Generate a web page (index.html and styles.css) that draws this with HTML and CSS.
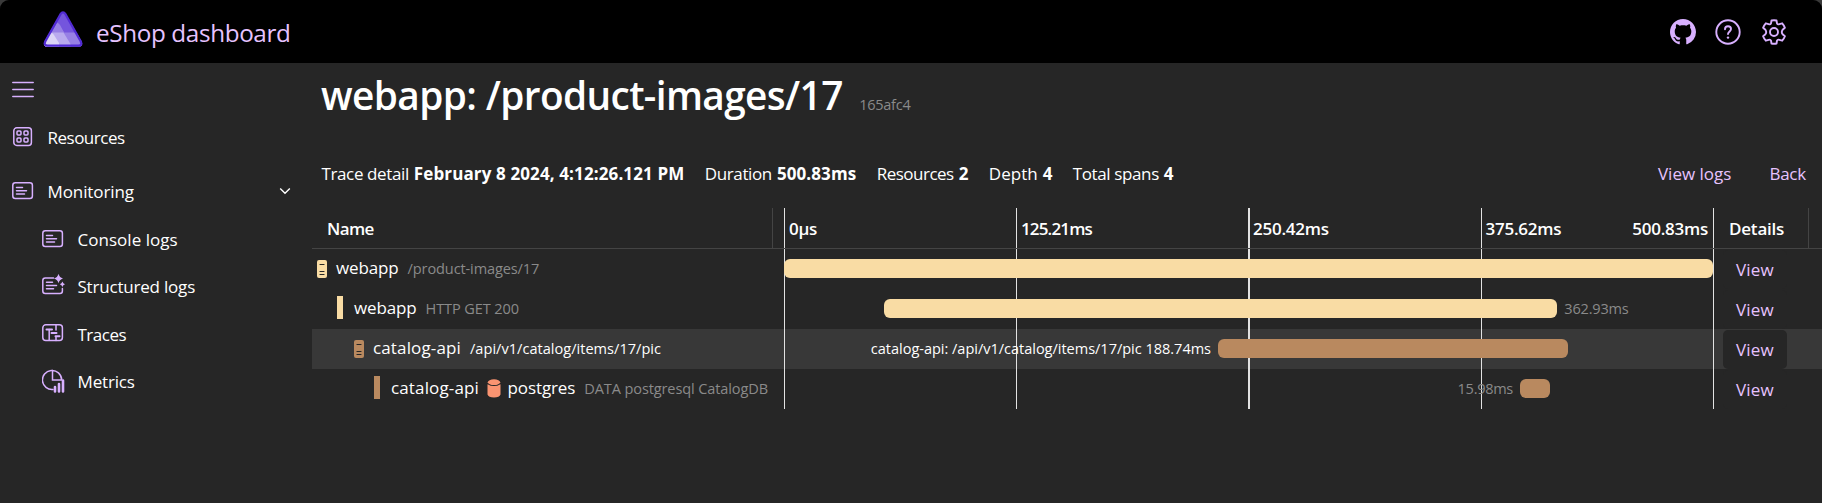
FILE: index.html
```
<!DOCTYPE html>
<html lang="en">
<head>
<meta charset="utf-8">
<title>eShop dashboard</title>
<link rel="stylesheet" href="styles.css">
</head>
<body>
<div class="app">
  <header class="topbar">
    <svg class="logo" width="42" height="38" viewBox="0 0 42 38">
      <defs><clipPath id="tri"><path d="M18 3.4Q21 -1.6 24 3.4L39.6 30.6Q41.6 35.6 36.6 35.6H5.4Q.4 35.6 2.4 30.6Z"/></clipPath></defs>
      <g clip-path="url(#tri)">
        <path fill="#7455dd" d="M0 0h42v38H0z"/>
        <path fill="#9780e5" d="M9 21.5 15.5 11.500 22 21.500H42V38H0z"/>
        <path fill="#9780e5" d="M11 21.500 14 13.500Q16 11 18 14L22 21.500z"/>
        <path fill="#b9aaee" d="M7 21.500H21.500L28.500 33V38H0z"/>
        <path fill="#dcd5f6" d="M0 38 7 24Q9.500 20 12 24L17 32V38z"/>
      </g>
      <path fill="none" stroke="#512bd4" stroke-width="2.300" stroke-linejoin="round" d="M18.500 3.200Q21 -.4 23.500 3.200L38.800 30.500Q40.500 34.600 36.500 34.600H5.500Q1.500 34.600 3.200 30.500Z"/>
    </svg>
    <span class="brand">eShop dashboard</span>
    <div class="top-actions">
      <svg width="26" height="26" viewBox="0 0 16 16" fill="#d8b0ff"><path d="M8 0C3.580 0 0 3.580 0 8c0 3.540 2.290 6.530 5.470 7.590.4.070.55-.17.55-.38 0-.19-.01-.82-.01-1.490-2.010.37-2.530-.49-2.690-.94-.09-.23-.48-.94-.82-1.130-.28-.15-.68-.52-.01-.53.63-.01 1.080.58 1.230.82.72 1.210 1.870.87 2.330.66.070-.52.28-.87.51-1.070-1.780-.2-3.640-.89-3.640-3.950 0-.87.31-1.590.82-2.150-.08-.2-.36-1.020.08-2.120 0 0 .67-.21 2.200.82.64-.18 1.320-.27 2-.27s1.360.09 2 .27c1.530-1.040 2.200-.82 2.200-.82.44 1.100.16 1.920.08 2.120.51.56.82 1.270.82 2.150 0 3.070-1.870 3.750-3.650 3.950.29.25.54.73.54 1.480 0 1.070-.01 1.930-.01 2.200 0 .21.15.46.55.38A8.010 8.010 0 0 0 16 8c0-4.420-3.580-8-8-8z"/></svg>
      <svg width="26" height="26" viewBox="0 0 26 26" fill="none" stroke="#d8b0ff" stroke-width="1.900"><circle cx="13" cy="13" r="11.700"/><path stroke-linecap="round" d="M10 10.300C10 8.400 11.300 7.300 13 7.300S16 8.400 16 10.100C16 12.300 13 12.600 13 15.100"/><circle cx="13" cy="18.600" r="1.200" fill="#d8b0ff" stroke="none"/></svg>
      <svg width="26" height="26" viewBox="0 0 26 26" fill="none" stroke="#d8b0ff" stroke-width="1.900" stroke-linejoin="round"><path d="M10.500 1.500Q13 .9 15.500 1.500L16 4.400Q16.600 5.800 18.400 5.200L21.200 4.300Q23 6.200 23.900 8.700L21.600 10.700Q20 13 21.600 15.300L23.900 17.300Q23 19.800 21.200 21.700L18.400 20.800Q16.600 20.200 16 21.600L15.500 24.500Q13 25.100 10.500 24.500L10 21.600Q9.400 20.200 7.600 20.800L4.800 21.700Q3 19.800 2.100 17.300L4.400 15.300Q6 13 4.400 10.700L2.100 8.700Q3 6.200 4.800 4.300L7.600 5.200Q9.400 5.800 10 4.400Z"/><circle cx="13" cy="13" r="4"/></svg>
    </div>
  </header>
  <div class="body">
    <nav class="sidebar">
      <div class="nav-item menu"><svg class="ico" width="22" height="22" viewBox="0 0 22 22"><path d="M.8 4.500h20.400M.8 11.500h20.400M.8 18.500h20.400"/></svg></div>
      <div class="nav-item resources">
        <svg class="ico" width="22" height="22" viewBox="0 0 22 22"><rect x="1.800" y="1.800" width="17.600" height="17.600" rx="3"/><rect x="5" y="5" width="4" height="4" rx="1"/><rect x="12" y="5" width="4" height="4" rx="1"/><rect x="5" y="12" width="4" height="4" rx="1"/><rect x="12" y="12" width="4" height="4" rx="1"/></svg>
        <span class="t-res">Resources</span>
      </div>
      <div class="nav-item monitoring">
        <svg class="ico" width="22" height="22" viewBox="0 0 22 22"><rect x=".8" y="2.800" width="19.600" height="15.600" rx="2.500"/><path d="M4.500 7.500h6M4.500 10.700h10M4.500 13.900h8"/></svg>
        <span class="t-mon">Monitoring</span>
        <svg class="chevron" width="12" height="8" viewBox="0 0 12 8"><path d="M1.200 1.400 6 6.200l4.800-4.800"/></svg>
      </div>
      <div class="nav-item sub console">
        <svg class="ico" width="22" height="22" viewBox="0 0 22 22"><rect x=".8" y="2.800" width="19.600" height="15.600" rx="2.500"/><path d="M4.500 7.500h6M4.500 10.700h10M4.500 13.900h8"/></svg>
        <span class="t-console">Console logs</span>
      </div>
      <div class="nav-item sub structured">
        <svg class="ico" width="24" height="24" viewBox="0 0 24 24"><path d="M11.500 4H3.300Q.8 4 .8 6.500V17Q.8 19.500 3.300 19.500H18Q20.400 19.500 20.400 17V14.500M4.500 8.200h6M4.500 11.500h10M4.500 14.700h7"/><path class="fill" d="M16.500 -.2Q17.400 3.500 21 4.500 17.400 5.500 16.500 9.200 15.600 5.500 12 4.500 15.600 3.500 16.500 -.2ZM20.400 7.500Q21 9.700 23 10.300 21 10.900 20.400 13 19.800 10.900 17.800 10.300 19.800 9.700 20.400 7.500Z"/></svg>
        <span class="t-struct">Structured logs</span>
      </div>
      <div class="nav-item sub traces">
        <svg class="ico" width="22" height="22" viewBox="0 0 22 22"><rect x=".8" y="1.800" width="19.600" height="15.600" rx="3"/><path d="M7.200 6.500V17M14 2v5M14 14v3.500"/><path class="thick" d="M4.500 6.400h5.500M9.500 10h5M13.500 13.300h4"/></svg>
        <span class="t-traces">Traces</span>
      </div>
      <div class="nav-item sub metrics">
        <svg class="ico" width="24" height="24" viewBox="0 0 24 24"><path d="M9 1.500A9.300 9.300 0 1 0 11 20.500M9 1.500A9.600 9.600 0 0 1 19.700 11H10.500V1.500"/><path class="bars" d="M13 22.500V18M17 22.500V15M21 22.500V11.500"/></svg>
        <span class="t-metrics">Metrics</span>
      </div>
    </nav>
    <main class="content">
      <h1 class="title">webapp: /product-images/17 <small class="trace-id">165afc4</small></h1>
      <div class="summary">
        <div class="detail"><span>Trace detail</span><b class="date">February 8 2024, 4:12:26.121 PM</b></div>
        <div class="duration"><span>Duration</span><b>500.83ms</b></div>
        <div class="res"><span>Resources</span><b>2</b></div>
        <div class="depth"><span>Depth</span><b>4</b></div>
        <div class="spans"><span>Total spans</span><b>4</b></div>
        <a class="logs">View logs</a><a class="back">Back</a>
      </div>
      <section class="table">
        <div class="row head">
          <div class="name"><span class="t-name">Name</span></div>
          <div class="track"><i class="tick">0µs</i><i class="tick narrow">125.21ms</i><i class="tick wide">250.42ms</i><i class="tick split"><span>375.62ms</span><span>500.83ms</span></i><i class="tick"></i></div>
          <div class="details"><span>Details</span></div>
        </div>
        <div class="row">
          <div class="name lvl1">
            <svg class="server" width="10" height="18" viewBox="0 0 10 18"><rect width="10" height="18" rx="2" fill="#f9dca4"/><path stroke="#262626" stroke-width="1.200" stroke-linecap="round" d="M3 4.500h4M3 11.500h4M3 14.500h4"/></svg>
            <span class="app-name">webapp</span><span class="op">/product-images/17</span>
          </div>
          <div class="track"><i class="tick"></i><i class="tick"></i><i class="tick wide"></i><i class="tick"></i><i class="tick"></i><div class="span cream" style="left:0%;width:99.900%"></div></div>
          <div class="details"><a class="view">View</a></div>
        </div>
        <div class="row">
          <div class="name lvl2"><i class="marker cream"></i><span class="app-name">webapp</span><span class="op">HTTP GET 200</span></div>
          <div class="track"><i class="tick"></i><i class="tick"></i><i class="tick wide"></i><i class="tick"></i><i class="tick"></i><div class="span cream" style="left:10.730%;width:72.370%"><span class="label after">362.93ms</span></div></div>
          <div class="details"><a class="view">View</a></div>
        </div>
        <div class="row active">
          <div class="name lvl3">
            <svg class="server" width="10" height="18" viewBox="0 0 10 18"><rect width="10" height="18" rx="2" fill="#b9895f"/><path stroke="#262626" stroke-width="1.200" stroke-linecap="round" d="M3 4.500h4M3 11.500h4M3 14.500h4"/></svg>
            <span class="api-name">catalog-api</span><span class="op">/api/v1/catalog/items/17/pic</span>
          </div>
          <div class="track"><i class="tick"></i><i class="tick"></i><i class="tick wide"></i><i class="tick"></i><i class="tick"></i><div class="span brown" style="left:46.670%;width:37.630%"><span class="label before">catalog-api: /api/v1/catalog/items/17/pic 188.74ms</span></div></div>
          <div class="details"><a class="view">View</a></div>
        </div>
        <div class="row">
          <div class="name lvl4">
            <i class="marker brown"></i><span class="api-name">catalog-api</span>
            <svg class="db" width="14" height="19" viewBox="0 0 14 19"><path fill="#fa9471" d="M.5 5.200Q7 9 13.500 5.200V15.500Q12.500 18.500 7 18.500T.5 15.500Z"/><ellipse cx="7" cy="3.200" rx="6.200" ry="2.900" fill="#fa9471"/></svg>
            <span class="pg-name">postgres</span><span class="op">DATA postgresql CatalogDB</span>
          </div>
          <div class="track"><i class="tick"></i><i class="tick"></i><i class="tick wide"></i><i class="tick"></i><i class="tick"></i><div class="span brown" style="left:79.140%;width:3.230%"><span class="label before short">15.98ms</span></div></div>
          <div class="details"><a class="view">View</a></div>
        </div>
      </section>
    </main>
  </div>
</div>
</body>
</html>
```
FILE: styles.css
```
* { box-sizing: border-box; }
html { background: #3a3a3a; }
body { margin: 0; font: 17px/24px "Open Sans", "Noto Sans", sans-serif; color: #fff; overflow: hidden; }
i { font-style: normal; }
svg { flex: none; display: block; }

.app { height: 503px; background: #262626; border-radius: 9px 9px 0 0; overflow: hidden; display: flex; flex-direction: column; }

.topbar { height: 63px; flex: none; background: #000; display: flex; align-items: center; padding: 0 35px 0 42px; }
.logo { margin-bottom: 4px; }
.brand { margin-left: 12px; padding-top: 2px; font-size: 24.250px; line-height: 34px; letter-spacing: -.36px; color: #e6c3ff; }
.top-actions { margin-left: auto; display: flex; gap: 20px; padding-top: 1px; }
.top-actions svg:first-child { margin-right: -1px; }

.body { flex: 1; display: flex; min-height: 0; }
.sidebar { width: 312px; flex: none; display: flex; flex-direction: column; padding: 16px 21px 0 12px; }
.nav-item { display: flex; align-items: center; height: 24px; gap: 13.500px; }
.nav-item.sub { padding-left: 30px; }
.nav-item span { padding-top: 2px; }
.ico { fill: none; stroke: #d8b0ff; stroke-width: 1.500; stroke-linecap: round; }
.ico .fill { fill: #d8b0ff; stroke: none; }
.ico .thick { stroke-width: 2; }
.ico .bars { stroke-width: 2.600; }
.menu { height: 20px; }
.resources { margin-top: 26px; }
.monitoring { margin-top: 30px; }
.console { margin-top: 24px; }
.structured, .metrics { margin-top: 23px; }
.traces { margin-top: 24px; }
.structured, .metrics { gap: 11.500px; }
.chevron { margin-left: auto; fill: none; stroke: #fff; stroke-width: 1.400; }
.t-res { letter-spacing: -.5px; }
.t-mon { letter-spacing: -.1px; }
.t-console { letter-spacing: .03px; }
.t-struct { letter-spacing: -.2px; }
.t-traces { letter-spacing: -.49px; }
.t-metrics { letter-spacing: -.16px; }

.content { flex: 1; min-width: 0; }
.title { margin: 6px 0 0 9px; font-size: 38.800px; font-weight: 600; line-height: 52px; letter-spacing: -.62px; white-space: nowrap; }
.trace-id { margin-left: 7px; font-size: 14.550px; line-height: 20px; font-weight: 400; letter-spacing: -.28px; color: #8a8a8a; }

.summary { display: flex; align-items: center; height: 24px; margin: 41px 16px 0 9.500px; white-space: nowrap; }
.summary > div { display: flex; gap: 5px; margin-right: 20.400px; }
.detail span, .duration span { letter-spacing: -.38px; }
.date { letter-spacing: .12px; }
.duration b { letter-spacing: .1px; }
.res span { letter-spacing: -.5px; }
.spans span { letter-spacing: -.38px; }
.logs, .back, .view { color: #e6c3ff; }
.logs { margin-left: auto; margin-right: 38px; }
.back { letter-spacing: -.23px; }

.table { margin-top: 22px; }
.row { height: 40px; display: grid; grid-template-columns: 472px 930px 1fr; }
.head { height: 41px; border-bottom: 1px solid #444; font-weight: 600; }
.active { background: #383838; }
.name { display: flex; align-items: center; white-space: nowrap; padding-bottom: 3px; }
.head .name { width: 461px; border-right: 1px solid #444; padding: 2px 0 0 15px; }
.t-name { letter-spacing: -.6px; }
.app-name { letter-spacing: -.13px; }
.api-name { letter-spacing: .14px; }
.pg-name { letter-spacing: -.1px; }
.op { margin: 0 0 0 9px; font-size: 14.550px; color: #8a8a8a; letter-spacing: -.12px; }
.active .op { color: #fff; letter-spacing: .02px; }
.lvl1 { padding-left: 5px; }
.lvl2 { padding-left: 25px; }
.lvl3 { padding-left: 42px; }
.lvl4 { padding-left: 62px; }
.server { margin: 2px 9px 0 0; }
.marker { width: 6px; height: 23px; margin-right: 11px; }
.lvl2 .marker { margin-bottom: 1px; }
.db { margin: 2px 7px 0 7.500px; }
.cream { background: #f9dca4; }
.brown { background: #b9895f; }

.track { position: relative; display: grid; grid-template-columns: 232px 232px 233px 232px 1px; }
.tick { border-left: 1px solid #e2e2e2; }
.tick.wide { border-left-width: 2px; }
.head .tick { padding: 9px 0 0 4px; letter-spacing: -.25px; }
.head .tick.narrow { letter-spacing: -.85px; }
.head .tick.wide { padding-left: 3px; }
.head .tick.split { display: flex; justify-content: space-between; padding: 9px 5px 0 3.500px; }
.head .tick:last-child { padding: 0; }
.span { position: absolute; top: 10px; height: 19px; border-radius: 6px; }
.label { position: absolute; top: -3px; font-size: 14.550px; line-height: 24px; letter-spacing: -.2px; color: #8a8a8a; white-space: nowrap; }
.before { right: 100%; margin-right: 7px; letter-spacing: -.03px; }
.after { left: 100%; margin-left: 7.500px; }
.before.short { letter-spacing: -.3px; }
.active .label { color: #fff; }

.details { display: flex; align-items: center; padding-left: 9px; }
.head .details { padding: 2px 0 0 15px; width: 95px; border-right: 1px solid #444; letter-spacing: -.2px; }
.view { height: 39px; width: 64px; padding: 8px 0 0 13px; border-radius: 5px; background: #262626; letter-spacing: .2px; }
```
